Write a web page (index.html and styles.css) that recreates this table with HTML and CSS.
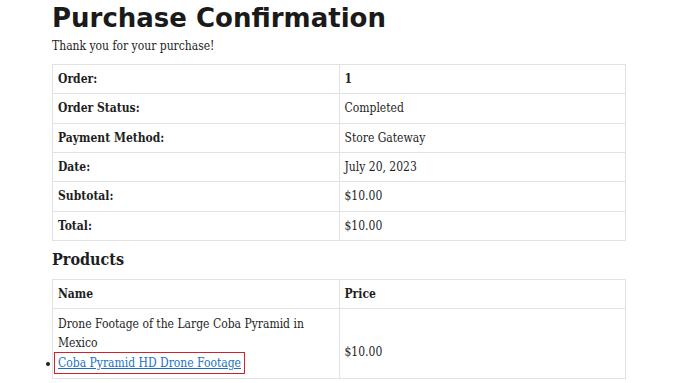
FILE: index.html
```html
<!DOCTYPE html>
<html lang="en">
<head>
<meta charset="utf-8">
<title>Purchase Confirmation</title>
<link rel="stylesheet" href="styles.css">
</head>
<body>
<main class="page">
  <h1 class="page-title">Purchase Confirmation</h1>
  <p class="intro">Thank you for your purchase!</p>

  <table class="details">
    <tbody>
      <tr><th>Order:</th><td><strong>1</strong></td></tr>
      <tr><th>Order Status:</th><td>Completed</td></tr>
      <tr><th>Payment Method:</th><td>Store Gateway</td></tr>
      <tr><th>Date:</th><td>July 20, 2023</td></tr>
      <tr><th>Subtotal:</th><td>$10.00</td></tr>
      <tr><th>Total:</th><td>$10.00</td></tr>
    </tbody>
  </table>

  <h2 class="section-title">Products</h2>

  <table class="details products">
    <thead>
      <tr><th>Name</th><th>Price</th></tr>
    </thead>
    <tbody>
      <tr>
        <td class="product-name">
          Drone Footage of the Large Coba Pyramid in Mexico
          <ul class="files">
            <li><a class="file-link" href="#">Coba Pyramid HD Drone Footage</a></li>
          </ul>
        </td>
        <td class="product-price">$10.00</td>
      </tr>
    </tbody>
  </table>
</main>
</body>
</html>
```

FILE: styles.css
```css
html, body {
  margin: 0;
  padding: 0;
  background: #ffffff;
}

body {
  font-family: "DejaVu Serif Condensed", "DejaVu Serif", "Liberation Serif", serif;
  font-stretch: condensed;
  font-size: 12px;
  color: #1e1e1e;
}

.page {
  padding: 0 54px 0 52px;
}

.page-title {
  font-family: "DejaVu Sans", "Open Sans", sans-serif;
  font-stretch: normal;
  font-weight: 700;
  font-size: 26px;
  line-height: 34px;
  color: #1a1a1a;
  margin: 0;
  padding-top: 1px;
}

.intro {
  margin: 3px 0 10px;
  line-height: 16px;
}

.details {
  width: 100%;
  border-collapse: collapse;
  border: 1px solid #e2e2e2;
}

.details th,
.details td {
  border: 1px solid #e2e2e2;
  padding: 5px 5px 5.33px;
  height: 18px;
  line-height: 18px;
  text-align: left;
  vertical-align: middle;
  width: 50%;
}

.details th {
  font-weight: 700;
}

.section-title {
  font-family: "DejaVu Serif Condensed", "DejaVu Serif", "Liberation Serif", serif;
  font-weight: 700;
  font-size: 16px;
  line-height: 22px;
  margin: 8px 0 8px;
}

.products td.product-name {
  padding-top: 6px;
  padding-bottom: 5px;
  line-height: 19px;
}

.products td.product-price {
  padding-top: 21px;
  padding-bottom: 5px;
}

.files {
  margin: 0 0 0 -6px;
  padding: 0;
  list-style: disc outside;
}

.files li {
  margin-left: 8px;
  padding-top: 1px;
}

.file-link {
  display: inline-block;
  color: #1a72c6;
  text-decoration: underline;
  outline: 1.5px solid #d2232a;
  outline-offset: 1px;
  padding: 0 2px;
  margin-left: -4px;
  line-height: 18px;
}
```
